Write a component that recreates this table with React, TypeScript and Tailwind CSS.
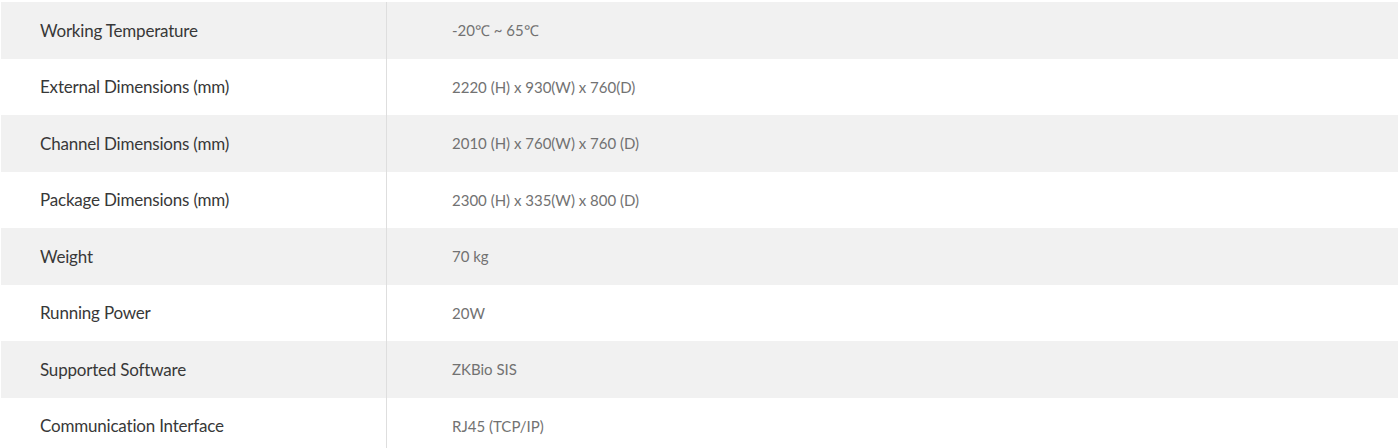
const SPECS = [
  { label: 'Working Temperature', value: '-20℃ ~ 65℃' },
  { label: 'External Dimensions (mm)', value: '2220 (H) x 930(W) x 760(D)' },
  { label: 'Channel Dimensions (mm)', value: '2010 (H) x 760(W) x 760 (D)' },
  { label: 'Package Dimensions (mm)', value: '2300 (H) x 335(W) x 800 (D)' },
  { label: 'Weight', value: '70 kg' },
  { label: 'Running Power', value: '20W' },
  { label: 'Supported Software', value: 'ZKBio SIS' },
  { label: 'Communication Interface', value: 'RJ45 (TCP/IP)' },
];

export default function App() {
  return (
    <div className="h-[448px] overflow-hidden bg-white pl-px pr-[2px] pt-[2px] font-['Lato',sans-serif]">
      <div className="flex flex-col">
        {SPECS.map((s, i) => (
          <div
            key={s.label}
            className={`grid h-[56.5px] grid-cols-[386px_1fr] ${i % 2 === 0 ? 'bg-[#f1f1f1]' : 'bg-white'}`}
          >
            <div className="flex items-center border-r border-[#dedede] pl-[39px] text-[17px] tracking-[-0.2px] text-[#383838]">
              {s.label}
            </div>
            <div className="flex items-center pl-[65px] text-[15px] text-[#727272]">
              {s.value}
            </div>
          </div>
        ))}
      </div>
    </div>
  );
}
